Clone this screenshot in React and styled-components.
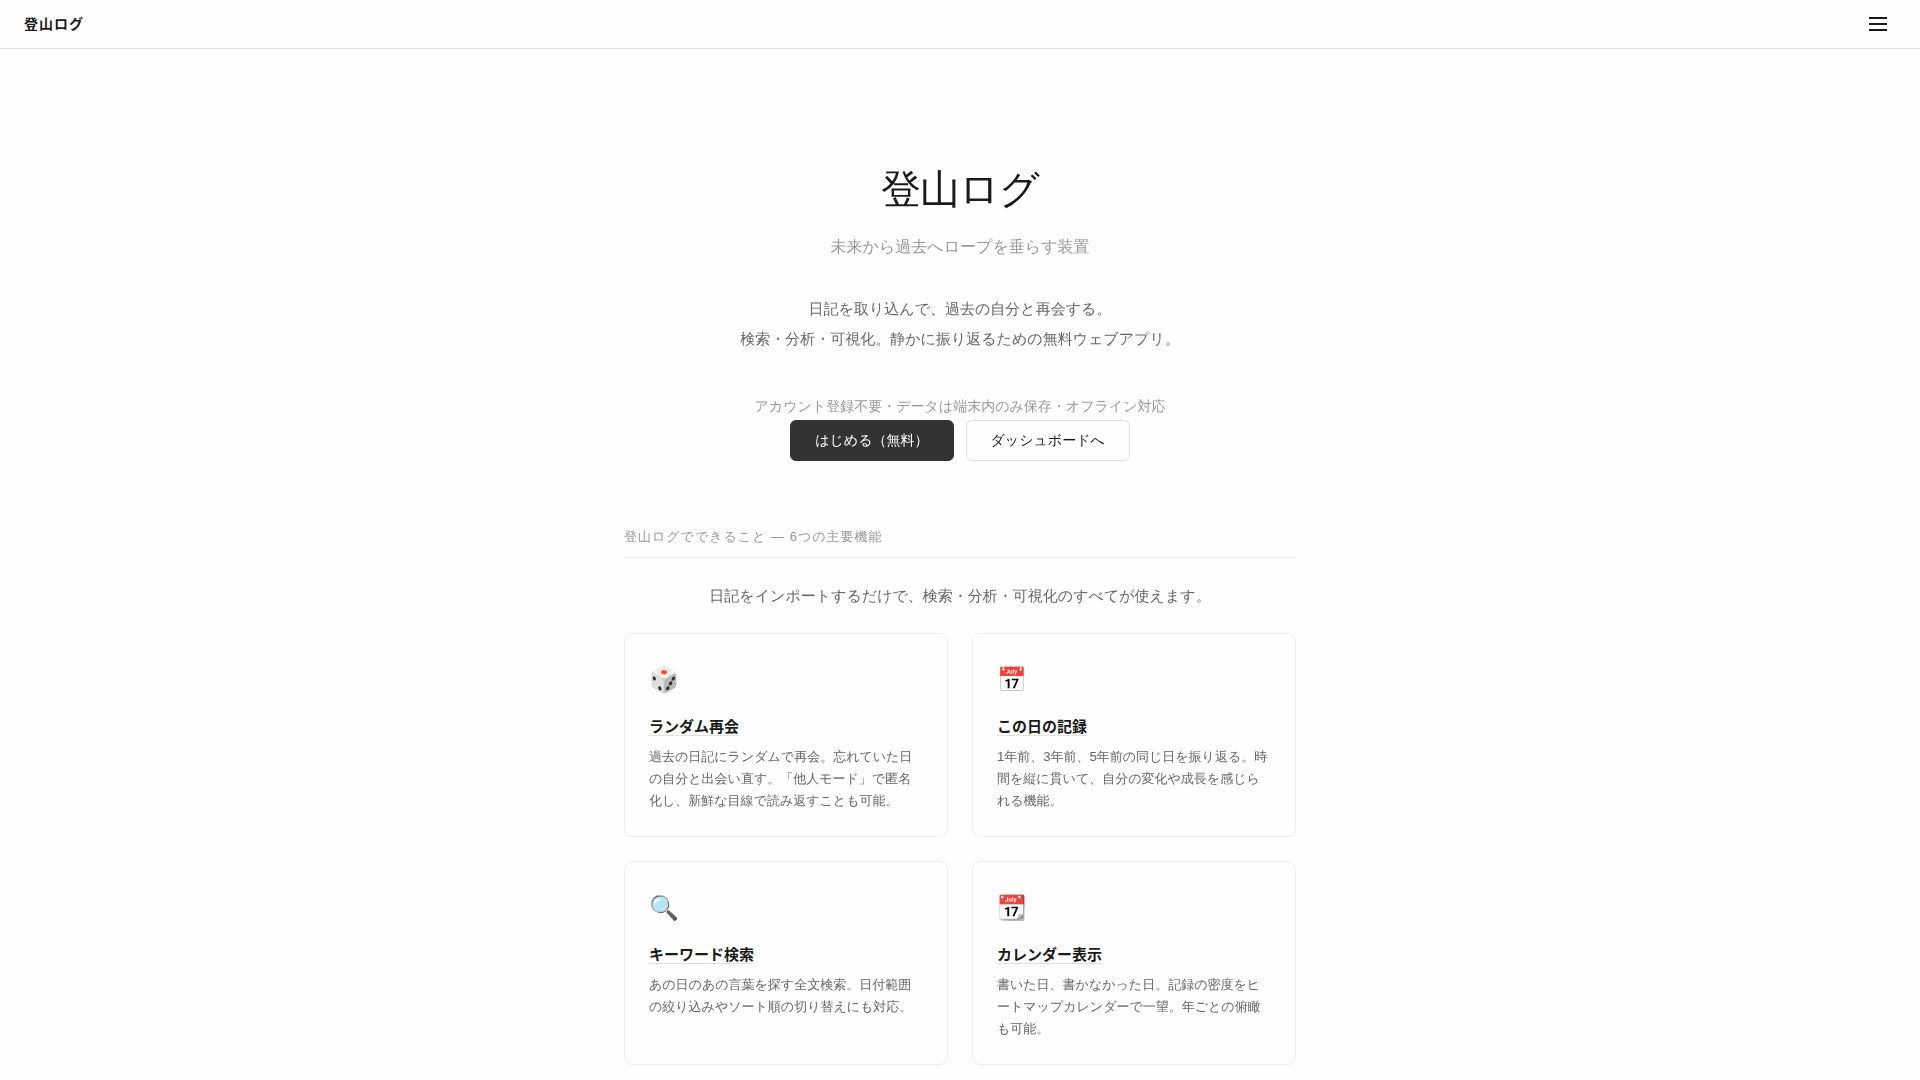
import React from "react";
import styled, { createGlobalStyle } from "styled-components";

const features = [
  {
    icon: "🎲",
    title: "ランダム再会",
    text: "過去の日記にランダムで再会。忘れていた日の自分と出会い直す。「他人モード」で匿名化し、新鮮な目線で読み返すことも可能。",
  },
  {
    icon: "📅",
    title: "この日の記録",
    text: "1年前、3年前、5年前の同じ日を振り返る。時間を縦に貫いて、自分の変化や成長を感じられる機能。",
  },
  {
    icon: "🔍",
    title: "キーワード検索",
    text: "あの日のあの言葉を探す全文検索。日付範囲の絞り込みやソート順の切り替えにも対応。",
  },
  {
    icon: "📆",
    title: "カレンダー表示",
    text: "書いた日、書かなかった日。記録の密度をヒートマップカレンダーで一望。年ごとの俯瞰も可能。",
  },
];

const App = () => {
  return (
    <>
      <GlobalStyle />
      <Header>
        <Logo href="#top">登山ログ</Logo>
        <MenuButton type="button" aria-label="メニュー">
          <MenuLine />
          <MenuLine />
          <MenuLine />
        </MenuButton>
      </Header>
      <Main id="top">
        <Hero>
          <Title>登山ログ</Title>
          <Tagline>未来から過去へロープを垂らす装置</Tagline>
          <Lead>
            日記を取り込んで、過去の自分と再会する。
            <br />
            検索・分析・可視化。静かに振り返るための無料ウェブアプリ。
          </Lead>
          <Note>アカウント登録不要・データは端末内のみ保存・オフライン対応</Note>
          <Actions>
            <ActionLink href="#start" $primary>
              はじめる（無料）
            </ActionLink>
            <ActionLink href="#dashboard">ダッシュボードへ</ActionLink>
          </Actions>
        </Hero>
        <section>
          <SectionTitle>登山ログでできること — 6つの主要機能</SectionTitle>
          <Intro>
            日記をインポートするだけで、検索・分析・可視化のすべてが使えます。
          </Intro>
          <Grid>
            {features.map((feature) => (
              <Card key={feature.title}>
                <CardIcon aria-hidden="true">{feature.icon}</CardIcon>
                <CardTitle>
                  <CardLink href="#feature">{feature.title}</CardLink>
                </CardTitle>
                <CardText>{feature.text}</CardText>
              </Card>
            ))}
          </Grid>
        </section>
      </Main>
    </>
  );
};

const boldFont = `"Liberation Sans", "Noto Sans CJK JP", sans-serif`;

const GlobalStyle = createGlobalStyle`
  * {
    box-sizing: border-box;
  }
  body {
    margin: 0;
    background: #fefefe;
    color: #1a1a1a;
    font-family: "Liberation Sans", "WenQuanYi Zen Hei", "Noto Sans CJK JP", sans-serif;
    font-size: 15px;
    line-height: 30px;
  }
  h1, h2, h3, p {
    margin: 0;
  }
  a {
    color: inherit;
    text-decoration: none;
  }
`;
const Header = styled.header`
  display: flex;
  justify-content: space-between;
  align-items: center;
  padding: 0 24px;
  border-bottom: 1px solid #e0e0e0;
`;
const Logo = styled.a`
  font-family: ${boldFont};
  font-size: 14px;
  font-weight: 600;
  line-height: 26px;
  letter-spacing: 1px;
`;
const MenuButton = styled.button`
  display: flex;
  flex-direction: column;
  justify-content: center;
  gap: 4px;
  height: 48px;
  padding: 0 9px;
  border: 0;
  background: none;
  cursor: pointer;
`;
const MenuLine = styled.span`
  width: 18px;
  height: 2px;
  background: #1a1a1a;
`;
const Main = styled.main`
  max-width: 720px;
  margin: 0 auto;
  padding: 0 24px 12px;
`;
const Hero = styled.div`
  padding: 112px 0 60px;
  text-align: center;
`;
const Title = styled.h1`
  font-size: 40px;
  font-weight: 300;
  line-height: 56px;
  letter-spacing: -1px;
`;
const Tagline = styled.p`
  margin-top: 15px;
  font-size: 16px;
  color: #999;
`;
const Lead = styled.p`
  margin-top: 32px;
  color: #666;
`;
const Note = styled.p`
  margin-top: 38px;
  font-size: 14px;
  line-height: 28px;
  color: #999;
`;
const Actions = styled.div`
  display: flex;
  justify-content: center;
  gap: 12px;
`;
const ActionLink = styled.a`
  padding: 7px 24px;
  border: 1px solid ${(props) => (props.$primary ? "#333" : "#e0e0e0")};
  border-radius: 6px;
  background: ${(props) => (props.$primary ? "#333" : "transparent")};
  color: ${(props) => (props.$primary ? "#fefefe" : "#1a1a1a")};
  font-size: 14px;
  line-height: 25px;
`;
const SectionTitle = styled.h2`
  padding: 4px 0 8px;
  border-bottom: 1px solid #eee;
  font-size: 13px;
  font-weight: 400;
  line-height: 24px;
  letter-spacing: 1px;
  color: #999;
`;
const Intro = styled.p`
  margin: 23px 0 22px;
  text-align: center;
  color: #666;
`;
const Grid = styled.div`
  display: grid;
  grid-template-columns: 1fr 1fr;
  gap: 24px;
`;
const Card = styled.article`
  padding: 24px;
  border: 1px solid #eee;
  border-radius: 8px;
`;
const CardIcon = styled.div`
  margin-bottom: 12px;
  font-size: 24px;
  line-height: 44px;
`;
const CardTitle = styled.h3`
  margin-bottom: 6px;
  font-family: ${boldFont};
  font-size: 15px;
  font-weight: 600;
  line-height: 26px;
`;
const CardLink = styled.a`
  border-bottom: 1px solid #e0e0e0;
`;
const CardText = styled.p`
  font-size: 13px;
  line-height: 22px;
  color: #666;
`;

export default App;
